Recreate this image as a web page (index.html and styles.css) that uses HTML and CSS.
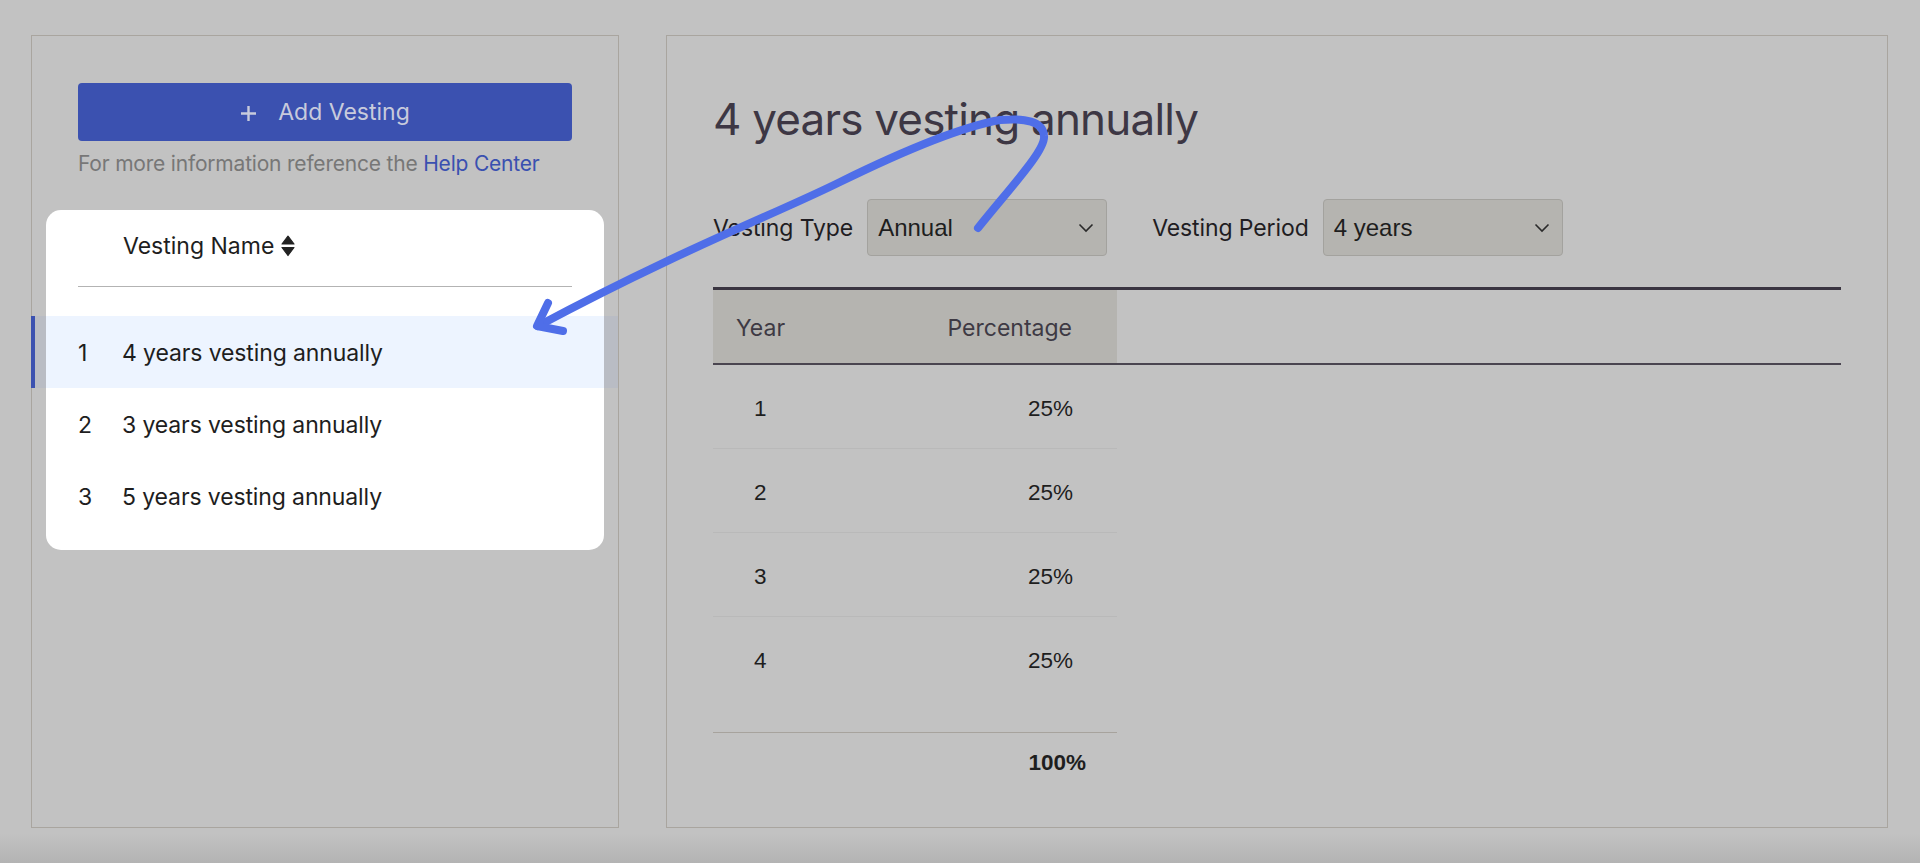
FILE: index.html
```html
<!DOCTYPE html>
<html lang="en">
<head>
<meta charset="utf-8">
<title>Vesting schedules</title>
<link rel="stylesheet" href="styles.css">
</head>
<body>
<div class="layout">
  <aside class="panel list-panel">
    <button class="add-btn" type="button">
      <svg class="plus" width="17" height="17" viewBox="0 0 17 17"><path d="M8.5 1v15M1 8.5h15" stroke="currentColor" stroke-width="2.4" fill="none"/></svg>
      <span>Add Vesting</span>
    </button>
    <p class="help">For more information reference the <a href="#">Help Center</a></p>
    <div class="spot-card">
      <div class="list-head">
        <span>Vesting Name</span>
        <svg class="sort" width="14" height="22" viewBox="0 0 14 22"><path d="M7 1.2 L13 9 H1 Z" fill="#222" stroke="#222" stroke-width="1.2" stroke-linejoin="round"/><path d="M1 12.5 H13 L7 20.5 Z" fill="#222" stroke="#222" stroke-width="1.2" stroke-linejoin="round"/></svg>
      </div>
      <ul class="list">
        <li class="list-row is-active"><span class="idx">1</span><span>4 years vesting annually</span></li>
        <li class="list-row"><span class="idx">2</span><span>3 years vesting annually</span></li>
        <li class="list-row"><span class="idx">3</span><span>5 years vesting annually</span></li>
      </ul>
    </div>
  </aside>

  <main class="panel detail-panel">
    <h1 class="title">4 years vesting annually</h1>
    <div class="controls">
      <div class="field">
        <span class="field-label">Vesting Type</span>
        <div class="select"><span>Annual</span><svg width="16" height="10" viewBox="0 0 16 10"><path d="M1.5 1.5 L8 8 L14.5 1.5" stroke="#2a2a2a" stroke-width="1.6" fill="none"/></svg></div>
      </div>
      <div class="field">
        <span class="field-label">Vesting Period</span>
        <div class="select"><span>4 years</span><svg width="16" height="10" viewBox="0 0 16 10"><path d="M1.5 1.5 L8 8 L14.5 1.5" stroke="#2a2a2a" stroke-width="1.6" fill="none"/></svg></div>
      </div>
    </div>

    <div class="schedule">
      <div class="sched-head">
        <div class="head-cells"><span>Year</span><span class="num">Percentage</span></div>
      </div>
      <div class="sched-row"><span class="year">1</span><span class="pct">25%</span></div>
      <div class="sched-row"><span class="year">2</span><span class="pct">25%</span></div>
      <div class="sched-row"><span class="year">3</span><span class="pct">25%</span></div>
      <div class="sched-row sched-row--last"><span class="year">4</span><span class="pct">25%</span></div>
      <div class="sched-total"><span></span><span class="total">100%</span></div>
    </div>
  </main>
</div>

<svg class="annotation" width="1920" height="863" viewBox="0 0 1920 863">
  <path d="M978 228 C1010 188 1046 150 1044 136 C1043 121 1025 118 1000 120 C955 128 895 155 840 182 C780 212 680 250 538 326" fill="none" stroke="#4f6ee8" stroke-width="8" stroke-linecap="round" stroke-linejoin="round"/>
  <path d="M548 303 L537 326 L563 331" fill="none" stroke="#4f6ee8" stroke-width="8" stroke-linecap="round" stroke-linejoin="round"/>
</svg>
</body>
</html>
```

FILE: styles.css
```css
html, body {
  margin: 0;
  padding: 0;
}

body {
  position: relative;
  min-height: 100vh;
  font-family: Inter, "Noto Sans", sans-serif;
  color: #1e1e1e;
  background: linear-gradient(to bottom, #c2c2c2 0, #c2c2c2 calc(100% - 30px), #b3b3b3 100%);
}

.layout {
  display: flex;
  gap: 47px;
  padding: 35px 32px 0 31px;
  box-sizing: border-box;
  height: 100vh;
}

.panel {
  box-sizing: border-box;
  height: 793px;
  border: 1px solid #a9a59f;
}

/* ---------- left panel ---------- */
.list-panel {
  flex: none;
  width: 588px;
  padding: 47px 46px;
}

.add-btn {
  display: flex;
  align-items: center;
  justify-content: center;
  gap: 21px;
  width: 100%;
  height: 58px;
  margin: 0;
  border: 0;
  border-radius: 4px;
  background: #3b51b0;
  color: #c8cbdc;
  font-family: Inter, "Noto Sans", sans-serif;
  font-size: 23px;
  font-weight: 400;
}

.plus {
  margin-top: 3px;
}

.help {
  margin: 9px 0 32px;
  font-size: 21px;
  line-height: 28px;
  letter-spacing: -0.2px;
  color: #777777;
}

.help a {
  color: #3a50b0;
  text-decoration: none;
}

.spot-card {
  margin: 0 -32px;
  padding: 0 32px 18px;
  background: #ffffff;
  border-radius: 15px;
}

.list-head {
  display: flex;
  align-items: center;
  gap: 7px;
  padding: 22px 0 26px 45px;
  font-size: 23px;
  line-height: 28px;
  color: #1e1e1e;
  border-bottom: 1px solid #b3b3b3;
}

.list {
  list-style: none;
  margin: 29px -46px 0 -47px;
  padding: 0;
}

.list-row {
  display: flex;
  box-sizing: border-box;
  height: 72px;
  padding: 2px 0 0 47px;
  font-size: 23px;
  line-height: 70px;
  letter-spacing: -0.12px;
  color: #1e1e1e;
}

.idx {
  width: 44px;
}

.is-active {
  background: linear-gradient(to right, #b9bcc4 0, #b9bcc4 15px, #edf4ff 15px, #edf4ff calc(100% - 14px), #b9bcc4 calc(100% - 14px));
  box-shadow: inset 4px 0 0 #3b51b0;
}

/* ---------- right panel ---------- */
.detail-panel {
  flex: 1;
  min-width: 0;
  padding: 56px 46px 0;
}

.title {
  margin: 0;
  font-size: 44px;
  font-weight: 400;
  line-height: 54px;
  letter-spacing: -0.8px;
  color: #3d3744;
}

.controls {
  display: flex;
  align-items: center;
  gap: 45px;
  margin-top: 53px;
}

.field {
  display: flex;
  align-items: center;
  gap: 14px;
}

.field-label {
  font-size: 23px;
  letter-spacing: -0.1px;
  color: #1f1d22;
}

.select {
  display: flex;
  align-items: center;
  justify-content: space-between;
  box-sizing: border-box;
  width: 240px;
  height: 57px;
  padding: 0 12px 0 10px;
  border: 1px solid #a3a29e;
  border-radius: 4px;
  background: #b5b4b0;
  font-family: "Liberation Sans", Arial, sans-serif;
  font-size: 24px;
  color: #1e1e1e;
}

.schedule {
  margin-top: 31px;
}

.sched-head {
  border-top: 3px solid #3a3541;
  border-bottom: 2px solid #4a4550;
}

.head-cells {
  display: grid;
  grid-template-columns: 1fr 1fr;
  box-sizing: border-box;
  width: 404px;
  height: 73px;
  padding-top: 3px;
  line-height: 70px;
  background: #b5b4b0;
  font-size: 23px;
  color: #3e3a44;
}

.head-cells span:first-child {
  padding-left: 23px;
}

.head-cells .num {
  text-align: right;
  padding-right: 45px;
}

.sched-row,
.sched-total {
  display: grid;
  grid-template-columns: 1fr 1fr;
  width: 404px;
  box-sizing: border-box;
  font-family: "Liberation Sans", Arial, sans-serif;
  font-size: 22.5px;
  color: #1e1e1e;
}

.sched-row {
  height: 84px;
  padding-top: 4px;
  line-height: 79px;
  border-bottom: 1px solid #b9b9b9;
}

.sched-row--last {
  height: 116px;
  border-bottom-color: #a7a39d;
}

.year {
  padding-left: 41px;
}

.pct {
  text-align: right;
  padding-right: 44px;
}

.sched-total {
  padding-top: 10px;
  line-height: 40px;
  font-weight: 700;
}

.total {
  text-align: right;
  padding-right: 31px;
}

/* ---------- annotation overlay ---------- */
.annotation {
  position: absolute;
  top: 0;
  left: 0;
  pointer-events: none;
}
```
